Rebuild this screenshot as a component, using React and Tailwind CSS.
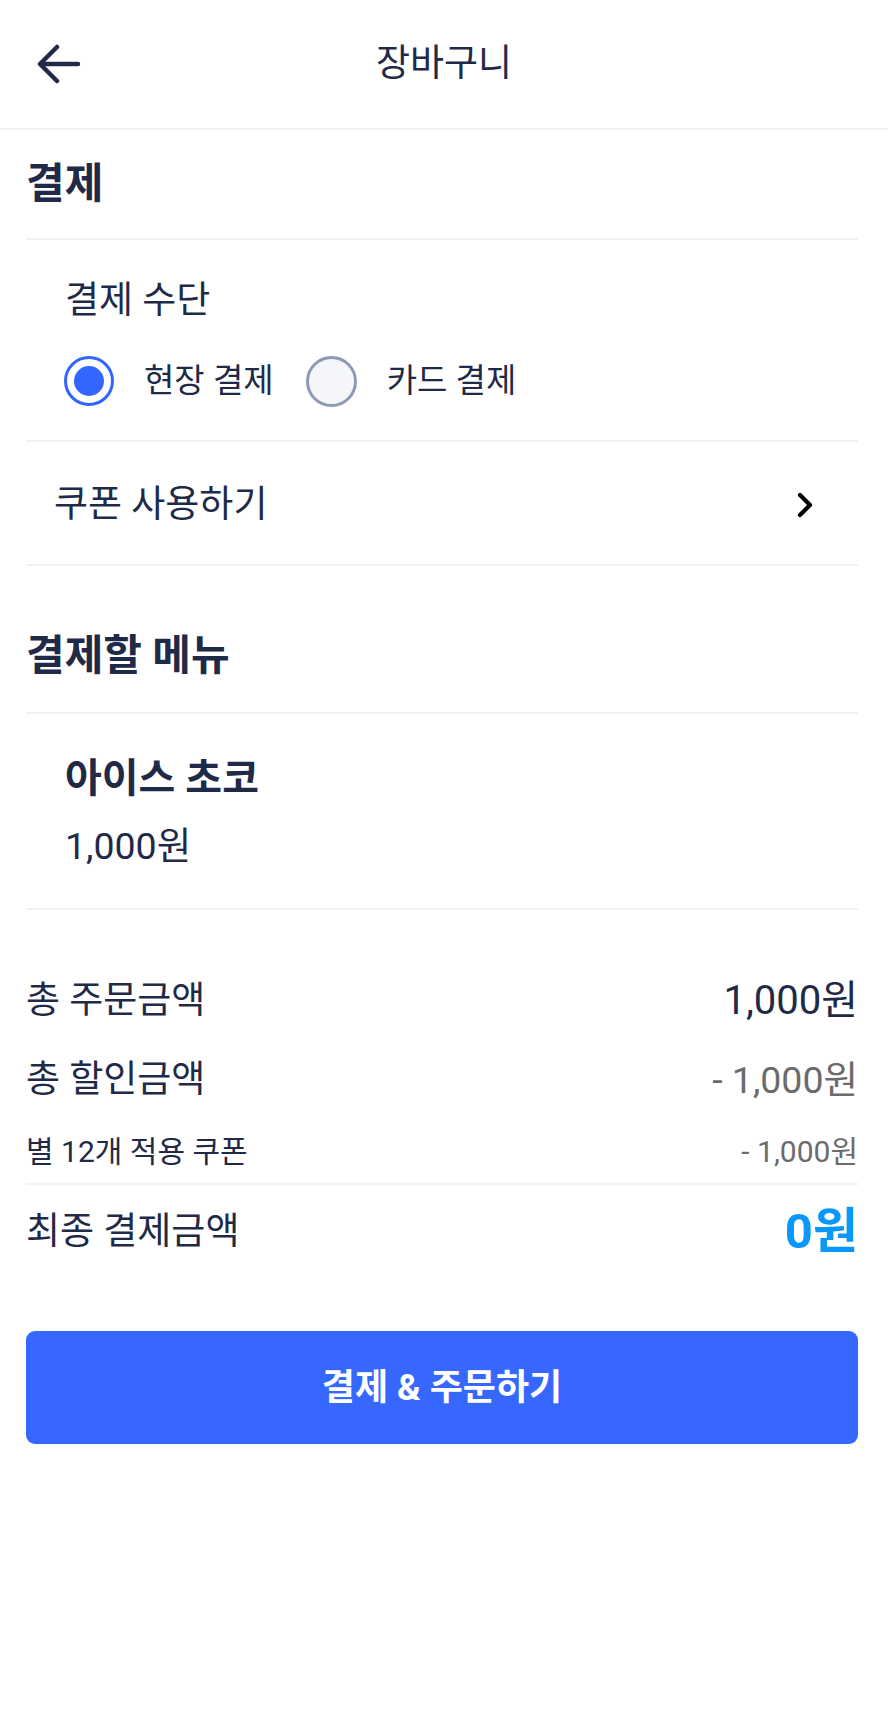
import { useState } from 'react';

const font = { fontFamily: 'Roboto, "Noto Sans CJK KR", sans-serif' };

function BackArrow() {
    return (
        <svg width="46" height="42" viewBox="0 0 46 42" fill="none" stroke="#1f2a48" strokeWidth="4.5" strokeLinecap="round" strokeLinejoin="round">
            <path d="M41 21H4" />
            <path d="M20 4L3 21L20 38" />
        </svg>
    );
}

function Radio({ checked, label, onClick }) {
    return (
        <button onClick={onClick} className="flex items-center">
            {checked ? (
                <span className="w-[50px] h-[50px] rounded-full border-[3px] border-[#3366ff] bg-white flex items-center justify-center">
                    <span className="w-[30px] h-[30px] rounded-full bg-[#3366ff]" />
                </span>
            ) : (
                <span className="w-[51px] h-[51px] rounded-full border-[3px] border-[#8c9ab8] bg-[#f4f6f9]" />
            )}
            <span className="ml-[30px] text-[33px] leading-[40px] text-[#1f2a48]">{label}</span>
        </button>
    );
}

export default function App() {
    const [method, setMethod] = useState('onsite');

    return (
        <div className="min-h-screen bg-white text-[#1f2a48]" style={font}>
            <header className="h-[130px] border-b-2 border-[#eef1f6] flex items-center relative">
                <button className="ml-[37px] flex items-center">
                    <BackArrow />
                </button>
                <h1 className="absolute left-0 right-0 text-center text-[37px] leading-[44px] pointer-events-none">장바구니</h1>
            </header>

            <main className="pl-[26px] pr-[30px]">
                <section className="h-[110px] flex items-center border-b-2 border-[#eef1f6]">
                    <h2 className="text-[42px] leading-[48px] font-bold">결제</h2>
                </section>

                <section className="pt-[41px] pb-[33px] border-b-2 border-[#eef1f6]">
                    <div className="pl-[39px] text-[37px] leading-[40px]">결제 수단</div>
                    <div className="mt-[34px] pl-[38px] flex items-center gap-[32px] h-[52px]">
                        <Radio checked={method === 'onsite'} label="현장 결제" onClick={() => setMethod('onsite')} />
                        <Radio checked={method === 'card'} label="카드 결제" onClick={() => setMethod('card')} />
                    </div>
                </section>

                <section className="h-[124px] pt-[4px] flex items-center justify-between pl-[28px] pr-[44px] border-b-2 border-[#eef1f6]">
                    <span className="text-[37px] leading-[44px]">쿠폰 사용하기</span>
                    <svg width="18" height="26" viewBox="0 0 18 26" fill="none" stroke="#000" strokeWidth="4.2" strokeLinecap="round" strokeLinejoin="round">
                        <path d="M4 3L14 13L4 23" />
                    </svg>
                </section>

                <section className="pt-[70px] pb-[36px] border-b-2 border-[#eef1f6]">
                    <h2 className="text-[42px] leading-[40px] font-bold">결제할 메뉴</h2>
                </section>

                <section className="pt-[43px] pb-[41px] pl-[39px] border-b-2 border-[#eef1f6]">
                    <div className="text-[40px] leading-[44px] font-semibold">아이스 초코</div>
                    <div className="mt-[24px] text-[37.5px] leading-[42px]">1,000원</div>
                </section>

                <section className="pt-[71px]">
                    <div className="flex items-center justify-between h-[40px]">
                        <span className="text-[37px]">총 주문금액</span>
                        <span className="text-[40px]">1,000원</span>
                    </div>
                    <div className="mt-[39px] flex items-center justify-between h-[40px]">
                        <span className="text-[37px]">총 할인금액</span>
                        <span className="text-[37.5px] text-[#6b6b6b]">- 1,000원</span>
                    </div>
                    <div className="mt-[35px] flex items-center justify-between h-[32px]">
                        <span className="text-[30px]">별 12개 적용 쿠폰</span>
                        <span className="text-[30px] text-[#6b6b6b]">- 1,000원</span>
                    </div>
                    <div className="mt-[16px] border-b-2 border-[#eef1f6]" />
                    <div className="mt-[23px] flex items-center justify-between h-[48px]">
                        <span className="text-[37px]">최종 결제금액</span>
                        <span className="text-[49px] font-bold text-[#0a98f8]">0원</span>
                    </div>
                </section>

                <button className="mt-[75px] w-full h-[113px] rounded-[9px] bg-[#3668ff] text-white text-[36px] font-bold flex items-center justify-center">
                    결제 &amp; 주문하기
                </button>
            </main>
        </div>
    );
}
